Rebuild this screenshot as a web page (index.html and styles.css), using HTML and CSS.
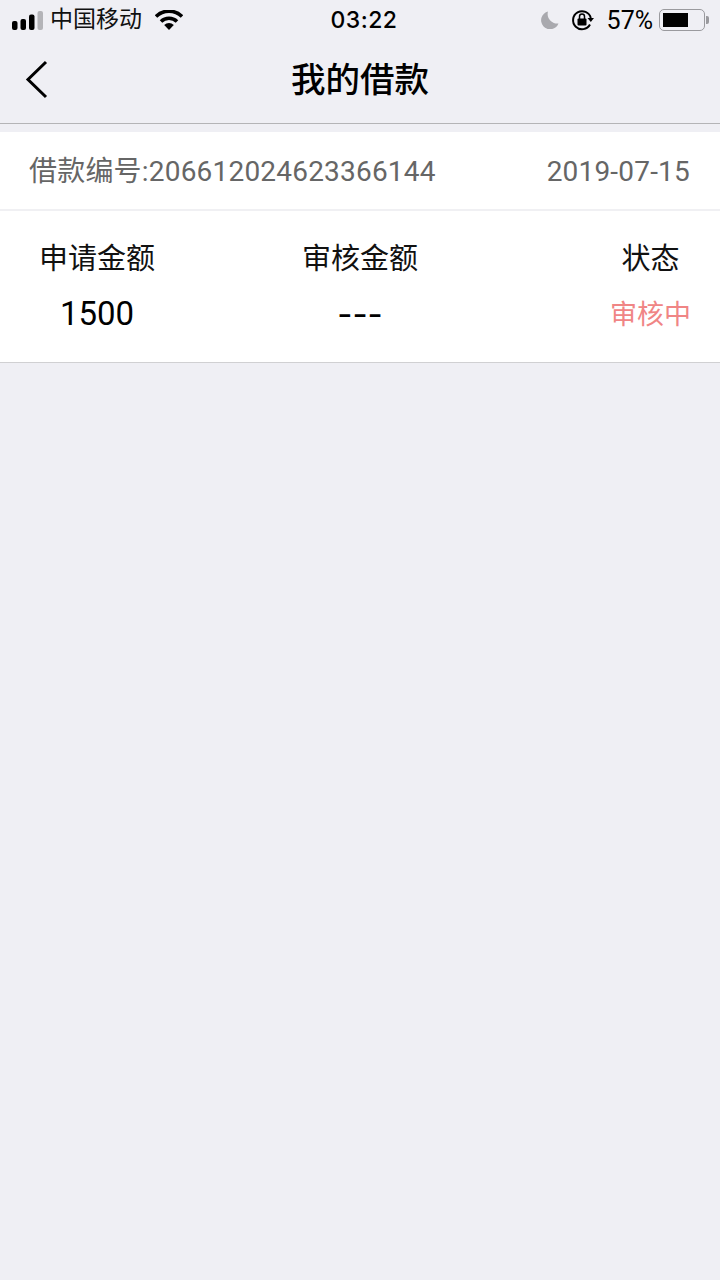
FILE: index.html
```html
<!DOCTYPE html>
<html lang="zh-CN">
<head>
    <meta charset="UTF-8">
    <meta name="viewport" content="width=device-width, initial-scale=1.0">
    <title>我的借款</title>
    <link rel="stylesheet" href="styles.css">
</head>
<body>
    <div class="status-bar">
        <div class="status-left">
            <svg class="signal" width="31" height="19" viewBox="0 0 31 19">
                <rect x="0" y="10" width="5.5" height="9" rx="2" fill="#000"/>
                <rect x="8.5" y="8" width="5.5" height="11" rx="2" fill="#000"/>
                <rect x="17" y="3.5" width="5.5" height="15.5" rx="2" fill="#000"/>
                <rect x="25.5" y="0" width="5.5" height="19" rx="2" fill="#b4b4b8"/>
            </svg>
            <span class="carrier">中国移动</span>
            <svg class="wifi" width="28" height="20" viewBox="0 0 28 20">
                <path d="M1 6.5 A18.5 18.5 0 0 1 27 6.5" fill="none" stroke="#000" stroke-width="3.6"/>
                <path d="M6 11.5 A11.5 11.5 0 0 1 22 11.5" fill="none" stroke="#000" stroke-width="3.6"/>
                <path d="M9.2 15 A7 7 0 0 1 18.8 15 L14 20 Z" fill="#000"/>
            </svg>
        </div>
        <div class="status-time">03:22</div>
        <div class="status-right">
            <svg class="moon" width="18" height="18" viewBox="0 0 18 18">
                <path d="M7 0.5 A9 9 0 1 0 17.5 12.5 A9.5 9.5 0 0 1 7 0.5 Z" fill="#a9a9ae"/>
            </svg>
            <svg class="lock" width="23" height="22" viewBox="0 0 23 22">
                <path d="M19 15.5 A9 9 0 1 1 19.8 9" fill="none" stroke="#000" stroke-width="2"/>
                <path d="M16.5 9 L23 9 L19.8 13 Z" fill="#000"/>
                <rect x="6.5" y="9.5" width="9" height="7" rx="1" fill="#000"/>
                <path d="M8.5 10 V7.5 A2.5 2.5 0 0 1 13.5 7.5 V10" fill="none" stroke="#000" stroke-width="1.5"/>
            </svg>
            <span class="battery-text">57%</span>
            <div class="battery">
                <div class="battery-body"><div class="battery-fill"></div></div>
                <div class="battery-nub"></div>
            </div>
        </div>
    </div>

    <div class="nav-bar">
        <svg class="back" width="24" height="40" viewBox="0 0 24 40">
            <path d="M21 2 L3 19.5 L21 37" fill="none" stroke="#000" stroke-width="3"/>
        </svg>
        <h1 class="nav-title">我的借款</h1>
    </div>

    <div class="loan-card">
        <div class="loan-head">
            <span>借款编号:206612024623366144</span>
            <span>2019-07-15</span>
        </div>
        <div class="loan-body">
            <div class="loan-col">
                <div class="col-label">申请金额</div>
                <div class="col-value">1500</div>
            </div>
            <div class="loan-col">
                <div class="col-label">审核金额</div>
                <div class="col-value col-empty">---</div>
            </div>
            <div class="loan-col col-status">
                <div class="col-label">状态</div>
                <div class="col-value status-text">审核中</div>
            </div>
        </div>
    </div>
</body>
</html>
```

FILE: styles.css
```css
body {
    margin: 0;
    min-height: 1280px;
    background-color: #efeff4;
    font-family: Roboto, "Noto Sans CJK SC", sans-serif;
    color: #000;
}

.status-bar {
    display: grid;
    grid-template-columns: 1fr auto 1fr;
    align-items: center;
    height: 40px;
}

.status-left {
    display: flex;
    align-items: center;
    padding-left: 12px;
}

.signal {
    margin-right: 8px;
}

.carrier {
    font-size: 23px;
    line-height: 40px;
    margin-right: 13px;
    margin-left: -1px;
    color: #111;
}

.status-time {
    margin-left: 8px;
    font-family: Inter, sans-serif;
    font-size: 23px;
    font-weight: 500;
    letter-spacing: 0.5px;
}

.status-right {
    display: flex;
    align-items: center;
    justify-content: flex-end;
    padding-right: 11px;
}

.moon {
    margin-right: 12px;
}

.lock {
    margin-right: 13px;
}

.battery-text {
    font-size: 25px;
    margin-right: 6px;
}

.battery {
    display: flex;
    align-items: center;
}

.battery-body {
    box-sizing: border-box;
    width: 46px;
    height: 22px;
    padding: 3px;
    border: 1.5px solid #9a9a9e;
    border-radius: 5px;
}

.battery-fill {
    width: 25px;
    height: 100%;
    background-color: #000;
}

.battery-nub {
    width: 3px;
    height: 8px;
    margin-left: 1px;
    background-color: #9a9a9e;
    border-radius: 0 2px 2px 0;
}

.nav-bar {
    display: grid;
    grid-template-columns: 1fr auto 1fr;
    align-items: center;
    height: 83px;
    border-bottom: 1px solid #b4b4b6;
}

.back {
    margin-left: 25px;
    margin-bottom: 4px;
}

.nav-title {
    margin: 0 0 9px;
    font-size: 34.5px;
    font-weight: 500;
}

.loan-card {
    margin-top: 8px;
    background-color: #fff;
    border-bottom: 1px solid #d0d0d2;
}

.loan-head {
    display: flex;
    justify-content: space-between;
    align-items: baseline;
    box-sizing: border-box;
    height: 79px;
    padding: 19px 30px 0 29px;
    border-bottom: 2px solid #f0f0f3;
    font-size: 28px;
    line-height: 42px;
    color: #666;
    letter-spacing: 0.2px;
}

.loan-body {
    display: grid;
    grid-template-columns: 194px 1fr 194px;
    height: 151px;
    text-align: center;
}

.col-status {
    justify-self: end;
    margin-right: 29px;
}

.col-label {
    margin-top: 27px;
    font-size: 29px;
    line-height: 42px;
    color: #111;
}

.col-value {
    margin-top: 13px;
    font-size: 33px;
    line-height: 42px;
}

.col-empty {
    font-family: Inter, sans-serif;
}

.status-text {
    padding-top: 1px;
    font-size: 27px;
    color: #f08585;
}
```
